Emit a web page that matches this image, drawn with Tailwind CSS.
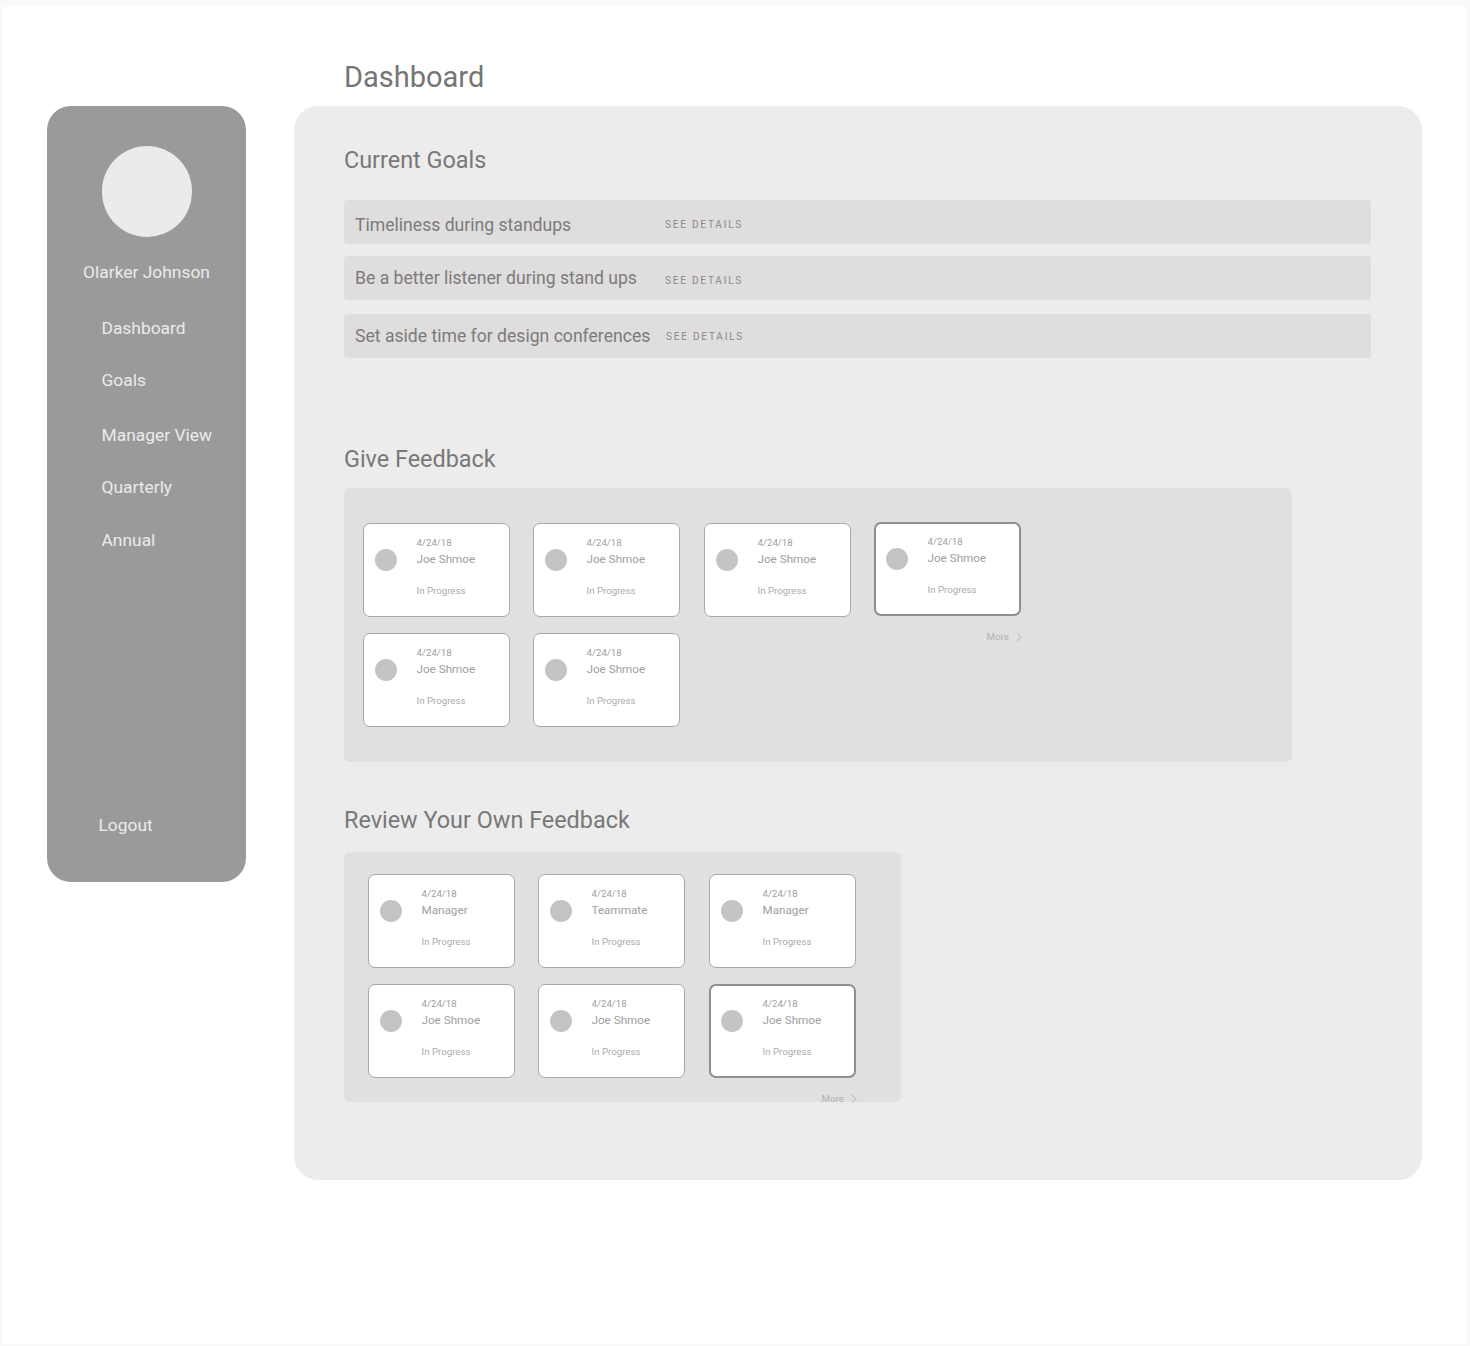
<!DOCTYPE html>
<html lang="en">
<head>
    <meta charset="UTF-8">
    <meta name="viewport" content="width=device-width, initial-scale=1.0">
    <title>Dashboard</title>
    <script src="https://cdn.jsdelivr.net/npm/@tailwindcss/browser@4"></script>
</head>
<body class="bg-[#f9f9f9] font-['Roboto',sans-serif]">
    <div class="mx-[3px] mt-[6px] h-[1338px] w-[1464px] overflow-hidden bg-white pl-[44px] pt-[100px]">
        <div class="flex items-start gap-[48px]">

            <!-- sidebar -->
            <aside class="flex h-[776px] w-[199px] flex-col rounded-[24px] bg-[#9a9a9a] text-[17.4px] text-[#ebebeb]">
                <div class="ml-[54.5px] mt-[40px] h-[90.5px] w-[90.5px] rounded-full bg-[#ebebeb]"></div>
                <div class="mt-[23.5px] h-[24px] text-center leading-[24px]">Olarker Johnson</div>
                <nav class="ml-[54.5px] mt-[32px] flex flex-col leading-[24px]">
                    <a class="h-[52px]">Dashboard</a>
                    <a class="h-[55px]">Goals</a>
                    <a class="h-[52px]">Manager View</a>
                    <a class="h-[53px]">Quarterly</a>
                    <a class="h-[24px]">Annual</a>
                </nav>
                <a class="ml-[51.5px] mt-[261px] leading-[24px]">Logout</a>
            </aside>

            <div class="relative h-[1074px] w-[1128px] rounded-[24px] bg-[#ececec] pl-[50px] pt-[38px]">
                <h1 class="absolute left-[50px] top-[-47px] text-[29px] leading-[36px] text-[#757575]">Dashboard</h1>

                <h2 class="h-[32px] text-[23.4px] leading-[32px] text-[#787878]">Current Goals</h2>
                <div class="mt-[24px] flex w-[1027px] flex-col">
                    <div class="flex h-[44px] items-center rounded-[4px] bg-[#dfdddd] pl-[11px] pt-[5px] text-[17.6px] text-[#7b7b7b]">
                        <span class="mt-[2px] w-[310px]">Timeliness during standups</span>
                        <span class="text-[10px] tracking-[1.8px] text-[#8a8a8a]">SEE DETAILS</span>
                    </div>
                    <div class="mt-[12px] flex h-[44px] items-center rounded-[4px] bg-[#dfdddd] pl-[11px] text-[17.6px] text-[#7b7b7b]">
                        <span class="w-[310px]">Be a better listener during stand ups</span>
                        <span class="mt-[5px] text-[10px] tracking-[1.8px] text-[#8a8a8a]">SEE DETAILS</span>
                    </div>
                    <div class="mt-[14px] flex h-[44px] items-center rounded-[4px] bg-[#dfdddd] pl-[11px] text-[17.6px] text-[#7b7b7b]">
                        <span class="mt-px w-[311px]">Set aside time for design conferences</span>
                        <span class="mt-px text-[10px] tracking-[1.8px] text-[#8a8a8a]">SEE DETAILS</span>
                    </div>
                </div>

                <h2 class="mt-[85px] h-[32px] text-[23.4px] leading-[32px] text-[#787878]">Give Feedback</h2>
                <div class="relative mt-[13px] h-[274px] w-[948px] rounded-[6px] bg-[#e0e0e0] pl-[19px] pt-[35px]">
                    <div class="flex gap-x-[23px]">
                        <div class="box-border flex h-[94px] w-[147px] items-start rounded-[7px] border border-[#a8a8a8] bg-white pl-[11px] pt-[13px]">
                            <div class="mt-[12px] h-[22px] w-[22px] shrink-0 rounded-full bg-[#c4c4c4]"></div>
                            <div class="ml-[19.5px] text-[#a0a0a0]">
                                <div class="text-[9.7px] leading-[12px]">4/24/18</div>
                                <div class="mt-[2px] text-[11.7px] leading-[16px]">Joe Shmoe</div>
                                <div class="mt-[18px] text-[9.7px] leading-[12px] text-[#ababab]">In Progress</div>
                            </div>
                        </div>
                        <div class="box-border flex h-[94px] w-[147px] items-start rounded-[7px] border border-[#a8a8a8] bg-white pl-[11px] pt-[13px]">
                            <div class="mt-[12px] h-[22px] w-[22px] shrink-0 rounded-full bg-[#c4c4c4]"></div>
                            <div class="ml-[19.5px] text-[#a0a0a0]">
                                <div class="text-[9.7px] leading-[12px]">4/24/18</div>
                                <div class="mt-[2px] text-[11.7px] leading-[16px]">Joe Shmoe</div>
                                <div class="mt-[18px] text-[9.7px] leading-[12px] text-[#ababab]">In Progress</div>
                            </div>
                        </div>
                        <div class="ml-px box-border flex h-[94px] w-[147px] items-start rounded-[7px] border border-[#a8a8a8] bg-white pl-[11px] pt-[13px]">
                            <div class="mt-[12px] h-[22px] w-[22px] shrink-0 rounded-full bg-[#c4c4c4]"></div>
                            <div class="ml-[19.5px] text-[#a0a0a0]">
                                <div class="text-[9.7px] leading-[12px]">4/24/18</div>
                                <div class="mt-[2px] text-[11.7px] leading-[16px]">Joe Shmoe</div>
                                <div class="mt-[18px] text-[9.7px] leading-[12px] text-[#ababab]">In Progress</div>
                            </div>
                        </div>
                        <div class="mt-[-1px] box-border flex h-[94px] w-[147px] items-start rounded-[7px] border-2 border-[#8f8f8f] bg-white pl-[10px] pt-[12px]">
                            <div class="mt-[12px] h-[22px] w-[22px] shrink-0 rounded-full bg-[#c4c4c4]"></div>
                            <div class="ml-[19.5px] text-[#a0a0a0]">
                                <div class="text-[9.7px] leading-[12px]">4/24/18</div>
                                <div class="mt-[2px] text-[11.7px] leading-[16px]">Joe Shmoe</div>
                                <div class="mt-[18px] text-[9.7px] leading-[12px] text-[#ababab]">In Progress</div>
                            </div>
                        </div>
                    </div>
                    <div class="mt-[16px] flex gap-x-[23px]">
                        <div class="box-border flex h-[94px] w-[147px] items-start rounded-[7px] border border-[#a8a8a8] bg-white pl-[11px] pt-[13px]">
                            <div class="mt-[12px] h-[22px] w-[22px] shrink-0 rounded-full bg-[#c4c4c4]"></div>
                            <div class="ml-[19.5px] text-[#a0a0a0]">
                                <div class="text-[9.7px] leading-[12px]">4/24/18</div>
                                <div class="mt-[2px] text-[11.7px] leading-[16px]">Joe Shmoe</div>
                                <div class="mt-[18px] text-[9.7px] leading-[12px] text-[#ababab]">In Progress</div>
                            </div>
                        </div>
                        <div class="box-border flex h-[94px] w-[147px] items-start rounded-[7px] border border-[#a8a8a8] bg-white pl-[11px] pt-[13px]">
                            <div class="mt-[12px] h-[22px] w-[22px] shrink-0 rounded-full bg-[#c4c4c4]"></div>
                            <div class="ml-[19.5px] text-[#a0a0a0]">
                                <div class="text-[9.7px] leading-[12px]">4/24/18</div>
                                <div class="mt-[2px] text-[11.7px] leading-[16px]">Joe Shmoe</div>
                                <div class="mt-[18px] text-[9.7px] leading-[12px] text-[#ababab]">In Progress</div>
                            </div>
                        </div>
                    </div>
                    <div class="absolute left-[642.5px] top-[143px] flex items-center gap-[7px] text-[9.7px] leading-[12px] text-[#b0b0b0]">
                        More
                        <svg class="h-[10px] w-[6px]" viewBox="0 0 6 10" fill="none" stroke="#c4c4c4" stroke-width="1.2"><path d="M1 1l4 4-4 4"/></svg>
                    </div>
                </div>

                <h2 class="mt-[42px] h-[32px] text-[23.4px] leading-[32px] text-[#787878]">Review Your Own Feedback</h2>
                <div class="relative mt-[16px] h-[250px] w-[557px] rounded-[6px] bg-[#e0e0e0] pl-[24px] pt-[22px]">
                    <div class="flex gap-x-[23px]">
                        <div class="box-border flex h-[94px] w-[147px] items-start rounded-[7px] border border-[#a8a8a8] bg-white pl-[11px] pt-[13px]">
                            <div class="mt-[12px] h-[22px] w-[22px] shrink-0 rounded-full bg-[#c4c4c4]"></div>
                            <div class="ml-[19.5px] text-[#a0a0a0]">
                                <div class="text-[9.7px] leading-[12px]">4/24/18</div>
                                <div class="mt-[2px] text-[11.7px] leading-[16px]">Manager</div>
                                <div class="mt-[18px] text-[9.7px] leading-[12px] text-[#ababab]">In Progress</div>
                            </div>
                        </div>
                        <div class="box-border flex h-[94px] w-[147px] items-start rounded-[7px] border border-[#a8a8a8] bg-white pl-[11px] pt-[13px]">
                            <div class="mt-[12px] h-[22px] w-[22px] shrink-0 rounded-full bg-[#c4c4c4]"></div>
                            <div class="ml-[19.5px] text-[#a0a0a0]">
                                <div class="text-[9.7px] leading-[12px]">4/24/18</div>
                                <div class="mt-[2px] text-[11.7px] leading-[16px]">Teammate</div>
                                <div class="mt-[18px] text-[9.7px] leading-[12px] text-[#ababab]">In Progress</div>
                            </div>
                        </div>
                        <div class="ml-px box-border flex h-[94px] w-[147px] items-start rounded-[7px] border border-[#a8a8a8] bg-white pl-[11px] pt-[13px]">
                            <div class="mt-[12px] h-[22px] w-[22px] shrink-0 rounded-full bg-[#c4c4c4]"></div>
                            <div class="ml-[19.5px] text-[#a0a0a0]">
                                <div class="text-[9.7px] leading-[12px]">4/24/18</div>
                                <div class="mt-[2px] text-[11.7px] leading-[16px]">Manager</div>
                                <div class="mt-[18px] text-[9.7px] leading-[12px] text-[#ababab]">In Progress</div>
                            </div>
                        </div>
                    </div>
                    <div class="mt-[16px] flex gap-x-[23px]">
                        <div class="box-border flex h-[94px] w-[147px] items-start rounded-[7px] border border-[#a8a8a8] bg-white pl-[11px] pt-[13px]">
                            <div class="mt-[12px] h-[22px] w-[22px] shrink-0 rounded-full bg-[#c4c4c4]"></div>
                            <div class="ml-[19.5px] text-[#a0a0a0]">
                                <div class="text-[9.7px] leading-[12px]">4/24/18</div>
                                <div class="mt-[2px] text-[11.7px] leading-[16px]">Joe Shmoe</div>
                                <div class="mt-[18px] text-[9.7px] leading-[12px] text-[#ababab]">In Progress</div>
                            </div>
                        </div>
                        <div class="box-border flex h-[94px] w-[147px] items-start rounded-[7px] border border-[#a8a8a8] bg-white pl-[11px] pt-[13px]">
                            <div class="mt-[12px] h-[22px] w-[22px] shrink-0 rounded-full bg-[#c4c4c4]"></div>
                            <div class="ml-[19.5px] text-[#a0a0a0]">
                                <div class="text-[9.7px] leading-[12px]">4/24/18</div>
                                <div class="mt-[2px] text-[11.7px] leading-[16px]">Joe Shmoe</div>
                                <div class="mt-[18px] text-[9.7px] leading-[12px] text-[#ababab]">In Progress</div>
                            </div>
                        </div>
                        <div class="ml-px box-border flex h-[94px] w-[147px] items-start rounded-[7px] border-2 border-[#8f8f8f] bg-white pl-[10px] pt-[12px]">
                            <div class="mt-[12px] h-[22px] w-[22px] shrink-0 rounded-full bg-[#c4c4c4]"></div>
                            <div class="ml-[19.5px] text-[#a0a0a0]">
                                <div class="text-[9.7px] leading-[12px]">4/24/18</div>
                                <div class="mt-[2px] text-[11.7px] leading-[16px]">Joe Shmoe</div>
                                <div class="mt-[18px] text-[9.7px] leading-[12px] text-[#ababab]">In Progress</div>
                            </div>
                        </div>
                    </div>
                    <div class="absolute left-[477.5px] top-[241px] flex items-center gap-[7px] text-[9.7px] leading-[12px] text-[#b0b0b0]">
                        More
                        <svg class="h-[10px] w-[6px]" viewBox="0 0 6 10" fill="none" stroke="#c4c4c4" stroke-width="1.2"><path d="M1 1l4 4-4 4"/></svg>
                    </div>
                </div>
            </div>
        </div>
    </div>
</body>
</html>
